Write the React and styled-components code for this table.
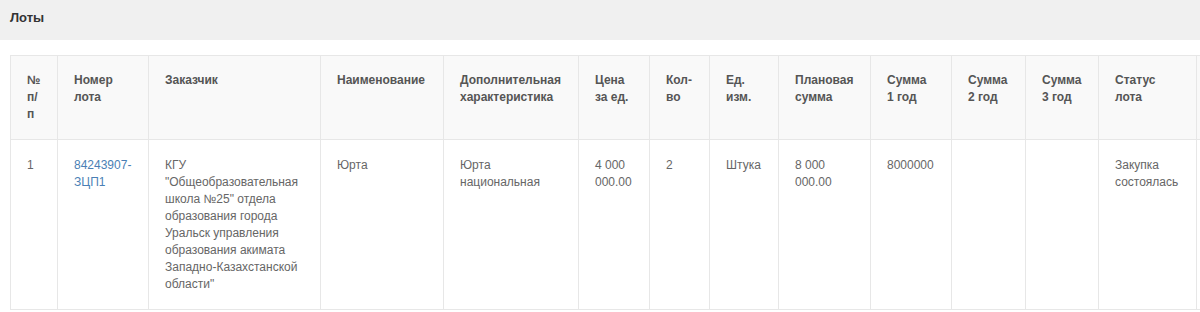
import styled, { createGlobalStyle } from "styled-components";

const GlobalStyle = createGlobalStyle`
  html, body {
    margin: 0;
    padding: 0;
    overflow: hidden;
    background: #fff;
  }
  body {
    font-family: "Liberation Sans", Arial, sans-serif;
    font-size: 12px;
    line-height: 17px;
    color: #666;
  }
`

const Panel = styled.div`
  width: 1200px;
  overflow: hidden;
`

const PanelHeading = styled.div`
  height: 40px;
  background: #f0f0f0;
  display: flex;
  align-items: center;
  padding: 0 10px;
  box-sizing: border-box;
`

const PanelTitle = styled.h3`
  margin: 0;
  margin-top: -6px;
  font-size: 13px;
  font-weight: bold;
  color: #333;
`

const PanelBody = styled.div`
  padding: 15px 0 0 10px;
  overflow: hidden;
`

const Table = styled.table`
  border-collapse: collapse;
  table-layout: fixed;
  width: 1290px;
`

const HeadCell = styled.th`
  background: #f9f9f9;
  border: 1px solid #e7e7e7;
  padding: 16px 16px 16px 16px;
  text-align: left;
  vertical-align: top;
  font-weight: bold;
  color: #555;
  word-wrap: break-word;
`

const Cell = styled.td`
  border: 1px solid #e7e7e7;
  padding: 17px 16px 16px 16px;
  vertical-align: top;
  color: #666;
  word-wrap: break-word;
`

const LotLink = styled.a`
  color: #4a7fb5;
  text-decoration: none;
`

const columns = [
  { title: <>№<br />п/<br />п</>, width: 47 },
  { title: <>Номер<br />лота</>, width: 91 },
  { title: "Заказчик", width: 172 },
  { title: "Наименование", width: 123 },
  { title: <>Дополнительная<br />характеристика</>, width: 135 },
  { title: <>Цена<br />за ед.</>, width: 71 },
  { title: <>Кол-<br />во</>, width: 60 },
  { title: <>Ед.<br />изм.</>, width: 69 },
  { title: <>Плановая<br />сумма</>, width: 92 },
  { title: <>Сумма<br />1 год</>, width: 81 },
  { title: <>Сумма<br />2 год</>, width: 74 },
  { title: <>Сумма<br />3 год</>, width: 73 },
  { title: <>Статус<br />лота</>, width: 98 },
  { title: "", width: 104 },
];

const App = () => {
  return (
    <>
      <GlobalStyle />
      <Panel>
        <PanelHeading>
          <PanelTitle>Лоты</PanelTitle>
        </PanelHeading>
        <PanelBody>
          <Table>
            <colgroup>
              {columns.map((c, i) => (
                <col key={i} style={{ width: c.width }} />
              ))}
            </colgroup>
            <thead>
              <tr>
                {columns.map((c, i) => (
                  <HeadCell key={i}>{c.title}</HeadCell>
                ))}
              </tr>
            </thead>
            <tbody>
              <tr>
                <Cell>1</Cell>
                <Cell>
                  <LotLink href="#">84243907-<br />ЗЦП1</LotLink>
                </Cell>
                <Cell>
                  КГУ "Общеобразовательная школа №25" отдела образования города
                  Уральск управления образования акимата Западно-Казахстанской
                  области"
                </Cell>
                <Cell>Юрта</Cell>
                <Cell>Юрта национальная</Cell>
                <Cell>4 000 000.00</Cell>
                <Cell>2</Cell>
                <Cell>Штука</Cell>
                <Cell>8 000 000.00</Cell>
                <Cell>8000000</Cell>
                <Cell></Cell>
                <Cell></Cell>
                <Cell>Закупка состоялась</Cell>
                <Cell></Cell>
              </tr>
            </tbody>
          </Table>
        </PanelBody>
      </Panel>
    </>
  );
};

export default App;
